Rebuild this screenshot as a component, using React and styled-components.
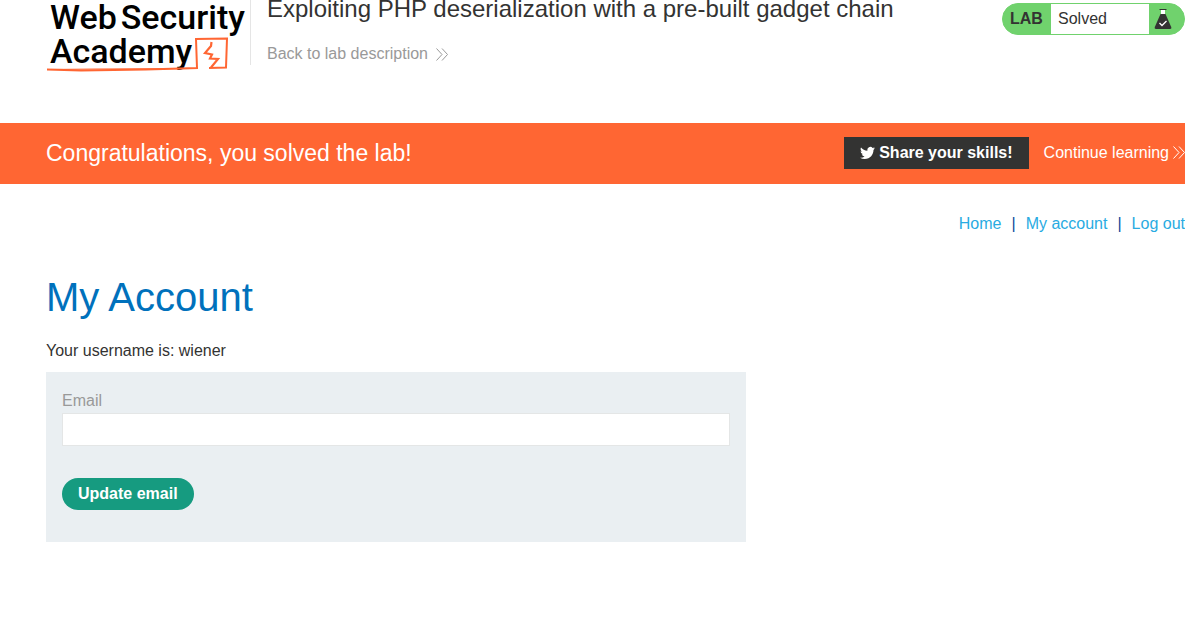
import React from 'react';
import styled, { createGlobalStyle } from 'styled-components';

const GlobalStyle = createGlobalStyle`
  * { box-sizing: border-box; }
  body {
    margin: 0;
    background: #fff;
    color: #333332;
    font: 16px/20px "Liberation Sans", Arial, sans-serif;
  }
  a { text-decoration: none; }
`;

const Header = styled.header`
  display: flex;
  align-items: flex-start;
  min-height: 123px;
  padding-left: 46px;
`;

const Logo = styled.a`
  position: relative;
  width: 204px;
  height: 76px;
  padding-left: 4px;
  color: #000;
  font: 500 34px/34px Roboto, sans-serif;
`;

const LogoLine = styled.span`
  display: flex;
  gap: 4px;
`;

const LogoMark = styled.svg`
  position: absolute;
  left: 0;
  top: 34px;
`;

const TitleBlock = styled.div`
  flex: 1;
  display: flex;
  flex-direction: column;
  align-items: flex-start;
  gap: 26px;
  height: 65px;
  padding-left: 16px;
  border-left: 1px solid #e5e5e5;
`;

const LabTitle = styled.h2`
  margin: 0;
  font-size: 24px;
  font-weight: 400;
  line-height: 18px;
`;

const ArrowLink = styled.a`
  display: flex;
  align-items: center;
  gap: ${(p) => p.$gap}px;
  color: ${(p) => p.$color};
`;

const Badge = styled.div`
  display: flex;
  width: 183px;
  height: 32px;
  margin-top: 3px;
  border: 1px solid #70d26d;
  border-radius: 16px;
  background: #70d26d;
  line-height: 30px;
`;

const BadgeName = styled.strong`
  width: 48px;
  padding-left: 7px;
`;

const BadgeStatus = styled.span`
  flex: 1;
  padding-left: 7px;
  background: #fff;
`;

const BadgeIcon = styled.span`
  display: flex;
  align-items: center;
  width: 35px;
  padding-left: 5px;
`;

const Banner = styled.section`
  display: flex;
  align-items: center;
  justify-content: space-between;
  min-height: 61px;
  padding: 0 0 2px 46px;
  background: #ff6633;
  color: #fff;
`;

const BannerText = styled.p`
  margin: 0;
  font-size: 23px;
  line-height: 32px;
`;

const BannerActions = styled.div`
  display: flex;
  align-items: center;
  gap: 15px;
`;

const ShareButton = styled.button`
  display: flex;
  align-items: center;
  gap: 4px;
  height: 32px;
  padding: 0 16px;
  border: 0;
  background: #333332;
  color: #fff;
  font: bold 16px/32px "Liberation Sans", Arial, sans-serif;
`;

const Nav = styled.nav`
  display: flex;
  justify-content: flex-end;
  gap: 10px;
  padding-top: 30px;
  color: #0b4a9b;
`;

const NavLink = styled.a`
  color: #29abe2;
`;

const Main = styled.main`
  padding: 38px 46px 0;
`;

const Heading = styled.h1`
  margin: 0 0 19px;
  color: #0071bc;
  font-size: 40px;
  font-weight: 400;
  line-height: 50px;
`;

const Username = styled.p`
  margin: 0 0 11px;
`;

const Form = styled.form`
  max-width: 700px;
  padding: 19px 16px 32px;
  background: #eaeff2;
`;

const Label = styled.label`
  display: block;
  margin-bottom: 2px;
  color: #999;
`;

const Input = styled.input`
  display: block;
  width: 100%;
  height: 33px;
  margin-bottom: 32px;
  padding: 0 8px;
  border: 1px solid #e4e6e6;
  background: #fff;
  font: inherit;
`;

const SubmitButton = styled.button`
  display: block;
  height: 32px;
  padding: 0 16px;
  border: 0;
  border-radius: 16px;
  background: #169b80;
  color: #fff;
  font: bold 16px/32px "Liberation Sans", Arial, sans-serif;
`;

const Chevrons = () => (
  <svg width="12" height="13" viewBox="0 0 12 13" fill="none" stroke="currentColor" strokeWidth="1" aria-hidden="true">
    <path d="M.5.5 6 6.500.5 12.500M6 .5 11.500 6.500 6 12.500" />
  </svg>
);

const Flask = () => (
  <svg width="18" height="20" viewBox="0 0 18 20" aria-hidden="true">
    <path d="M5.500 0h7v1h-7z" fill="#333332" />
    <path d="M7 1h4v4H7z" fill="#fff" />
    <path d="M6.500 5h5L17 17.500Q18 20 16 20H2q-2 0-1-2.500z" fill="#333332" />
    <path d="m5.500 14 2.500 2.500 4.500-4.500" fill="none" stroke="#fff" strokeWidth="1.300" />
  </svg>
);

const Bird = () => (
  <svg width="15" height="16" viewBox="0 0 24 24" fill="#fff" aria-hidden="true">
    <path d="M23.950 4.570a10 10 0 0 1-2.820.775 4.960 4.960 0 0 0 2.160-2.720c-.950.555-2.010.960-3.130 1.180a4.920 4.920 0 0 0-8.380 4.480C7.690 8.090 4.070 6.130 1.640 3.160a4.820 4.820 0 0 0-.670 2.480c0 1.710.870 3.210 2.190 4.100a4.900 4.900 0 0 1-2.230-.620v.060a4.920 4.920 0 0 0 3.950 4.830 5 5 0 0 1-2.210.080 4.940 4.940 0 0 0 4.600 3.420A9.870 9.870 0 0 1 0 19.540a13.990 13.990 0 0 0 7.560 2.210c9.050 0 14-7.500 14-13.980 0-.210 0-.420-.020-.630a9.940 9.940 0 0 0 2.460-2.550z" />
  </svg>
);

export default function App() {
  return (
    <>
      <GlobalStyle />
      <Header>
        <Logo href="#" aria-label="Web Security Academy">
          <LogoLine><span>Web</span><span>Security</span></LogoLine>
          <LogoLine>Academy</LogoLine>
          <LogoMark width="186" height="40" viewBox="0 0 186 40" fill="none" stroke="#ff6633" strokeWidth="2">
            <path d="M1 35.500 35 36.500 100 35.500 151 34 150 5 181 4.500 180 33.500 163 34" />
            <path d="M2 35.500 50 35 148 34.500" strokeWidth="1.200" />
            <path d="M165.500 8 165 12 159 19 166 20.500 164 24.500 172 25 165 33.500" strokeWidth="2.200" />
          </LogoMark>
        </Logo>
        <TitleBlock>
          <LabTitle>Exploiting PHP deserialization with a pre-built gadget chain</LabTitle>
          <ArrowLink href="#" $color="#999" $gap={8}>Back to lab description <Chevrons /></ArrowLink>
        </TitleBlock>
        <Badge>
          <BadgeName>LAB</BadgeName>
          <BadgeStatus>Solved</BadgeStatus>
          <BadgeIcon><Flask /></BadgeIcon>
        </Badge>
      </Header>
      <Banner>
        <BannerText>Congratulations, you solved the lab!</BannerText>
        <BannerActions>
          <ShareButton type="button"><Bird />Share your skills!</ShareButton>
          <ArrowLink href="#" $color="#fff" $gap={4}>Continue learning <Chevrons /></ArrowLink>
        </BannerActions>
      </Banner>
      <Nav>
        <NavLink href="#">Home</NavLink>
        <span>|</span>
        <NavLink href="#">My account</NavLink>
        <span>|</span>
        <NavLink href="#">Log out</NavLink>
      </Nav>
      <Main>
        <Heading>My Account</Heading>
        <Username>Your username is: wiener</Username>
        <Form>
          <Label htmlFor="email">Email</Label>
          <Input id="email" type="email" />
          <SubmitButton type="button">Update email</SubmitButton>
        </Form>
      </Main>
    </>
  );
}
